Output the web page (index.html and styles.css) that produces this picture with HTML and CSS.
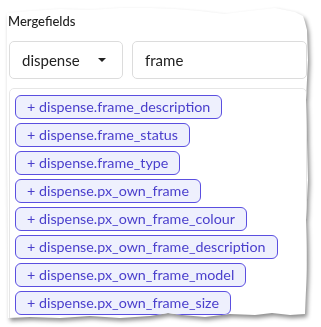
FILE: index.html
```html
<!DOCTYPE html>
<html lang="en">
<head>
    <meta charset="UTF-8">
    <meta name="viewport" content="width=device-width, initial-scale=1.0">
    <title>Mergefields</title>
    <link rel="stylesheet" href="styles.css">
</head>
<body>
    <div class="shot">
        <div class="paper">
            <div class="title">Mergefields</div>
            <div class="filters">
                <div class="select">
                    <span>dispense</span>
                    <span class="caret"></span>
                </div>
                <div class="search">frame</div>
            </div>
            <div class="fields">
                <button class="chip">+ dispense.frame_description</button>
                <button class="chip">+ dispense.frame_status</button>
                <button class="chip">+ dispense.frame_type</button>
                <button class="chip">+ dispense.px_own_frame</button>
                <button class="chip">+ dispense.px_own_frame_colour</button>
                <button class="chip">+ dispense.px_own_frame_description</button>
                <button class="chip">+ dispense.px_own_frame_model</button>
                <button class="chip">+ dispense.px_own_frame_size</button>
            </div>
        </div>
    </div>
</body>
</html>
```

FILE: styles.css
```css
body {
    margin: 0;
    background-color: white;
    font-family: Lato, "Noto Sans", sans-serif;
    color: #222;
}
.shot {
    width: 321px;
    height: 327px;
    filter: drop-shadow(2px 3px 2px rgba(0, 0, 0, 0.45));
}
.paper {
    box-sizing: border-box;
    width: 321px;
    height: 327px;
    padding: 13px 14px 0 9px;
    background-color: white;
    overflow: hidden;
    /* bordes rasgados de la captura */
    clip-path: polygon(7px 13px, 30px 11px, 60px 9px, 90px 10px, 120px 8px, 150px 8px, 175px 9px, 200px 11px, 225px 14px, 240px 12px, 258px 10px, 275px 8px, 295px 12px, 303px 16px, 305px 22px, 307px 30px, 308px 60px, 306px 100px, 307px 140px, 308px 180px, 306px 220px, 307px 260px, 306px 290px, 305px 314px, 290px 315px, 272px 313px, 255px 315px, 230px 314px, 205px 317px, 182px 315px, 168px 313px, 150px 316px, 120px 318px, 90px 316px, 60px 318px, 30px 317px, 8px 318px, 8px 250px, 7px 150px);
}
.title {
    margin-left: -1px;
    font-size: 13px;
    line-height: 16px;
    font-weight: 500;
}
.filters {
    display: flex;
    gap: 9px;
    margin-top: 12px;
}
.select, .search {
    box-sizing: border-box;
    height: 38px;
    border: 1px solid #dcdcdc;
    border-radius: 5px;
    display: flex;
    align-items: center;
    font-size: 15px;
    color: #222;
}
.select {
    width: 114px;
    padding: 0 14px 0 12px;
    justify-content: space-between;
}
.caret {
    width: 0;
    height: 0;
    border-left: 4px solid transparent;
    border-right: 4px solid transparent;
    border-top: 4px solid #222;
    margin-right: 2px;
}
.search {
    flex: 1;
    padding: 0 12px;
}
.fields {
    margin-top: 9px;
    height: 260px;
    border: 1px solid #e6e6e6;
    border-radius: 5px;
    padding: 6px 5px;
    display: flex;
    flex-direction: column;
    align-items: flex-start;
    gap: 4px;
}
.chip {
    height: 24px;
    padding: 0 11px;
    border: 1px solid #5b4fe0;
    border-radius: 6px;
    background-color: #eef0fd;
    color: #4a3fcc;
    font-family: Lato, "Noto Sans", sans-serif;
    font-size: 14.3px;
    line-height: 22px;
    cursor: pointer;
    white-space: nowrap;
}
```
